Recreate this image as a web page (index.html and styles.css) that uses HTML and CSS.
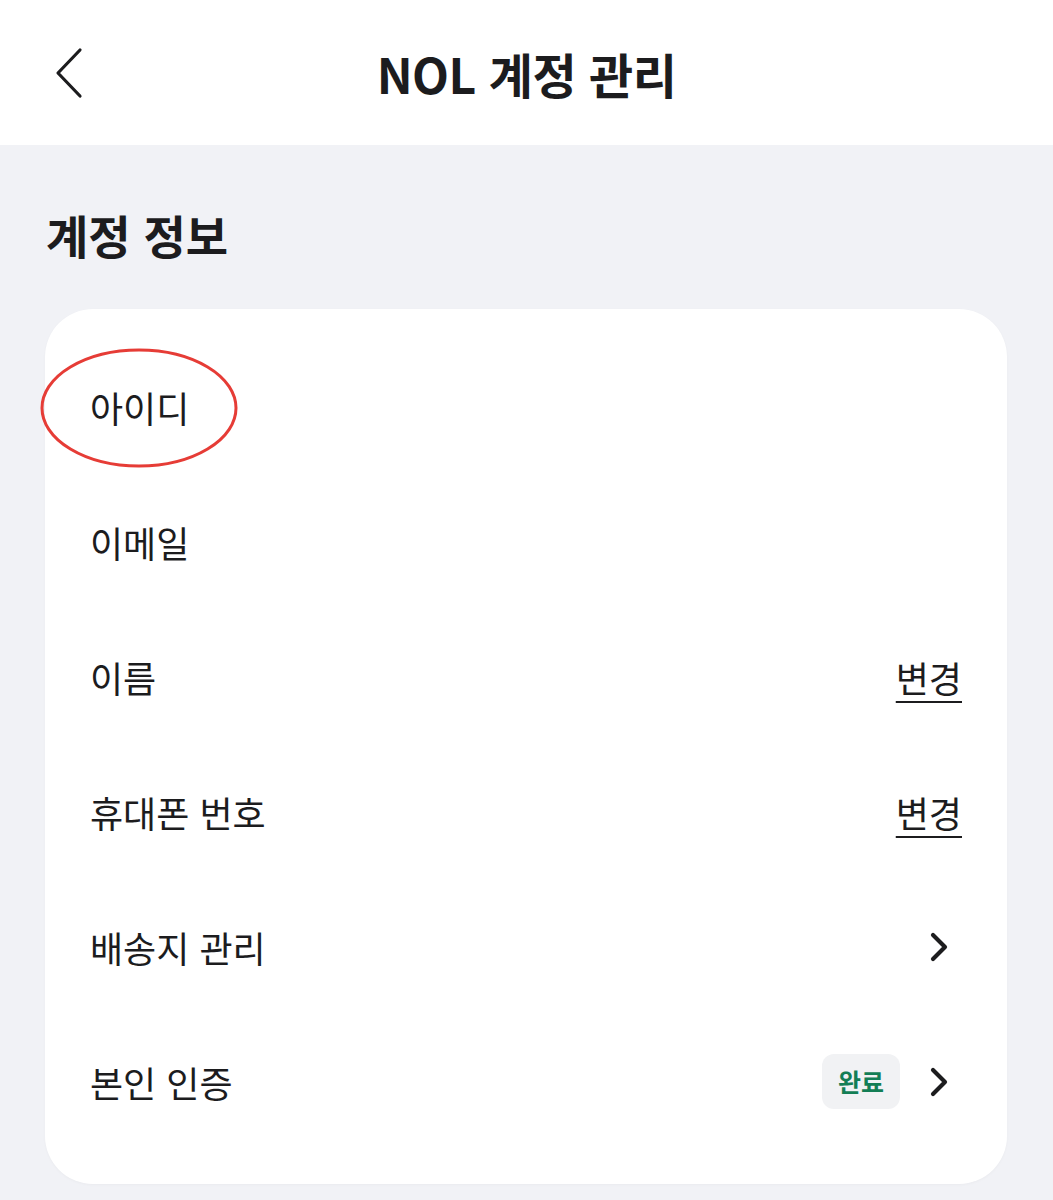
FILE: index.html
```html
<!DOCTYPE html>
<html lang="ko">
<head>
    <meta charset="UTF-8">
    <meta name="viewport" content="width=device-width, initial-scale=1.0">
    <title>NOL 계정 관리</title>
    <link rel="stylesheet" href="styles.css">
</head>
<body>
    <header class="top-bar">
        <button class="back-btn" aria-label="뒤로">
            <svg width="34" height="52" viewBox="0 0 34 52"><path d="M28 3 L6 26 L28 49" fill="none" stroke="#1c1c1e" stroke-width="3.2" stroke-linecap="round" stroke-linejoin="round"/></svg>
        </button>
        <h1 class="page-title">NOL 계정 관리</h1>
    </header>
    <main class="content">
        <h2 class="section-title">계정 정보</h2>
        <div class="card">
            <div class="row">
                <span class="label circled">아이디
                    <svg class="mark" width="200" height="122" viewBox="0 0 200 122"><ellipse cx="100" cy="61" rx="97" ry="58" fill="none" stroke="#e63c36" stroke-width="3"/></svg>
                </span>
            </div>
            <div class="row"><span class="label">이메일</span></div>
            <div class="row"><span class="label">이름</span><a class="change">변경</a></div>
            <div class="row"><span class="label">휴대폰 번호</span><a class="change">변경</a></div>
            <div class="row">
                <span class="label">배송지 관리</span>
                <svg class="chev" width="22" height="32" viewBox="0 0 22 32"><path d="M5 4 L17 16 L5 28" fill="none" stroke="#1c1c1e" stroke-width="4.2" stroke-linecap="round" stroke-linejoin="round"/></svg>
            </div>
            <div class="row">
                <span class="label">본인 인증</span>
                <div class="right">
                    <span class="badge">완료</span>
                    <svg class="chev" width="22" height="32" viewBox="0 0 22 32"><path d="M5 4 L17 16 L5 28" fill="none" stroke="#1c1c1e" stroke-width="4.2" stroke-linecap="round" stroke-linejoin="round"/></svg>
                </div>
            </div>
        </div>
    </main>
</body>
</html>
```

FILE: styles.css
```css
body {
    margin: 0;
    padding: 0;
    font-family: "Noto Sans CJK KR", "Noto Sans", sans-serif;
    background-color: #f1f2f6;
    color: #1c1c1e;
}
.top-bar {
    height: 145px;
    background: #fff;
    display: flex;
    align-items: center;
    justify-content: center;
    position: relative;
}
.back-btn {
    position: absolute;
    left: 52px;
    top: 47px;
    background: none;
    border: none;
    padding: 0;
}
.page-title {
    margin: 0;
    font-size: 48px;
    font-weight: 700;
    letter-spacing: -0.5px;
}
.content { padding: 0 46px 20px 45px; }
.section-title {
    margin: 0;
    padding: 58px 0 44px 1px;
    font-size: 46px;
    font-weight: 700;
    line-height: 62px;
}
.card {
    background: #fff;
    border-radius: 48px;
    padding: 30px 45px 35px 45px;
    box-shadow: 0 1px 3px rgba(0,0,0,0.03);
}
.row {
    height: 135px;
    display: flex;
    align-items: center;
    justify-content: space-between;
}
.label { font-size: 36px; }
.circled { position: relative; }
.mark {
    position: absolute;
    left: -51px;
    top: 50%;
    margin-top: -60px;
}
.change {
    font-size: 36px;
    text-decoration: underline;
    text-underline-offset: 8px;
    text-decoration-thickness: 2px;
}
.chev { margin-right: 12px; }
.right { display: flex; align-items: center; gap: 28px; }
.badge {
    background: #f1f2f4;
    color: #137e55;
    font-size: 25px;
    font-weight: 700;
    border-radius: 12px;
    padding: 9px 16px;
    line-height: 37px;
}
```
